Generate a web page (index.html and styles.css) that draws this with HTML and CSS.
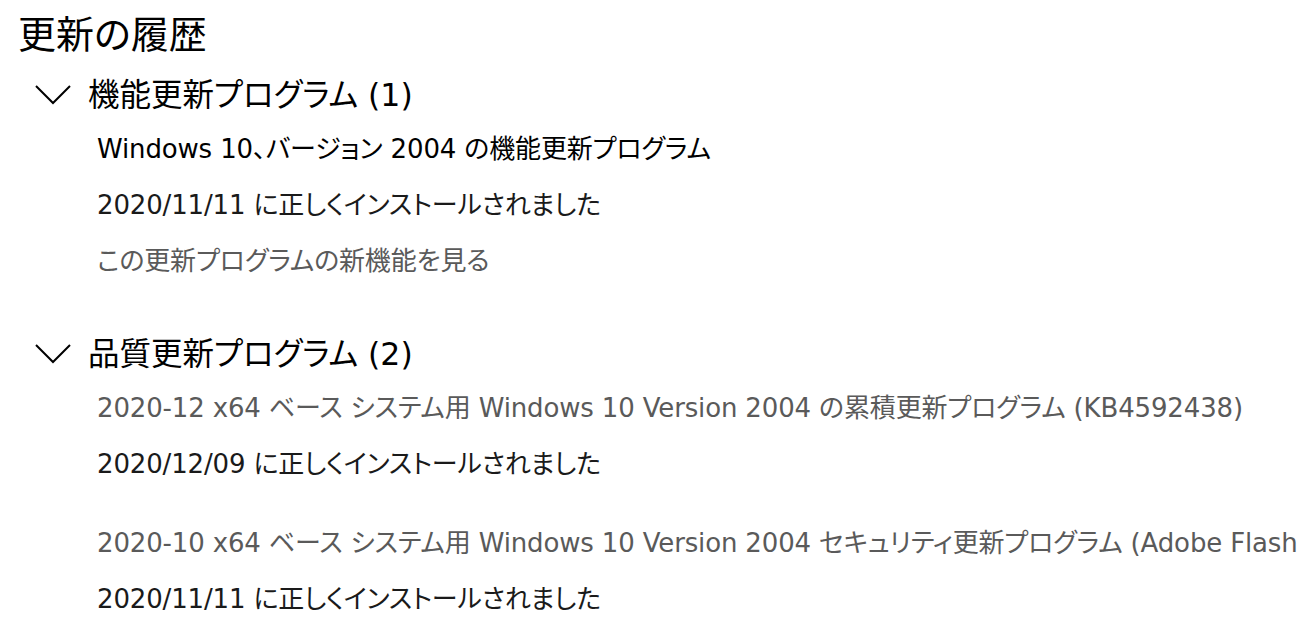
FILE: index.html
```html
<html>

<head>
    <meta charset="utf-8" />
    <link rel="stylesheet" href="styles.css">
</head>

<body>
    <div class="page">
        <h1 class="title">更新の履歴</h1>

        <div class="group">
            <div class="group-header">
                <svg class="chevron" width="36" height="20" viewBox="0 0 36 20">
                    <polyline points="1,1 18,18 35,1" />
                </svg>
                <span>機能更新プログラム (1)</span>
            </div>
            <div class="item">
                <div class="line strong">Windows 10、バージョン 2004 の機能更新プログラム</div>
                <div class="line">2020/11/11 に正しくインストールされました</div>
                <div class="line link">この更新プログラムの新機能を見る</div>
            </div>
        </div>

        <div class="group second">
            <div class="group-header">
                <svg class="chevron" width="36" height="20" viewBox="0 0 36 20">
                    <polyline points="1,1 18,18 35,1" />
                </svg>
                <span>品質更新プログラム (2)</span>
            </div>
            <div class="item">
                <div class="line link">2020-12 x64 ベース システム用 Windows 10 Version 2004 の累積更新プログラム (KB4592438)</div>
                <div class="line">2020/12/09 に正しくインストールされました</div>
            </div>
            <div class="item">
                <div class="line link">2020-10 x64 ベース システム用 Windows 10 Version 2004 セキュリティ更新プログラム (Adobe Flash</div>
                <div class="line">2020/11/11 に正しくインストールされました</div>
            </div>
        </div>
    </div>
</body>

</html>
```

FILE: styles.css
```css
html,
body {
    margin: 0;
    height: 100%;
    background: #fff;
}

body {
    overflow: hidden;
    font-family: "DejaVu Sans", "Noto Sans CJK JP", sans-serif;
    font-feature-settings: "palt";
    color: #000;
}

.page {
    padding-left: 18px;
}

.title {
    margin: 8px 0 0 0;
    font-family: "Noto Sans CJK JP", sans-serif;
    font-size: 38px;
    font-weight: normal;
    line-height: 48px;
}

.group-header {
    display: flex;
    align-items: center;
    height: 46px;
    margin-top: 13px;
    margin-left: 17px;
    font-size: 31.5px;
}

.group.second .group-header {
    margin-top: 39px;
}

.chevron {
    margin-top: 6px;
    margin-right: 17px;
    fill: none;
    stroke: #000;
    stroke-width: 2;
}

.item {
    margin-top: 6px;
    margin-left: 79px;
}

.item + .item {
    margin-top: 23px;
}

.line {
    font-size: 26px;
    letter-spacing: -0.15px;
    line-height: 56px;
    white-space: nowrap;
    overflow: hidden;
    color: #1a1a1a;
}

.line.strong {
    color: #000;
}

.line.link {
    color: #5a5a5a;
}
```
